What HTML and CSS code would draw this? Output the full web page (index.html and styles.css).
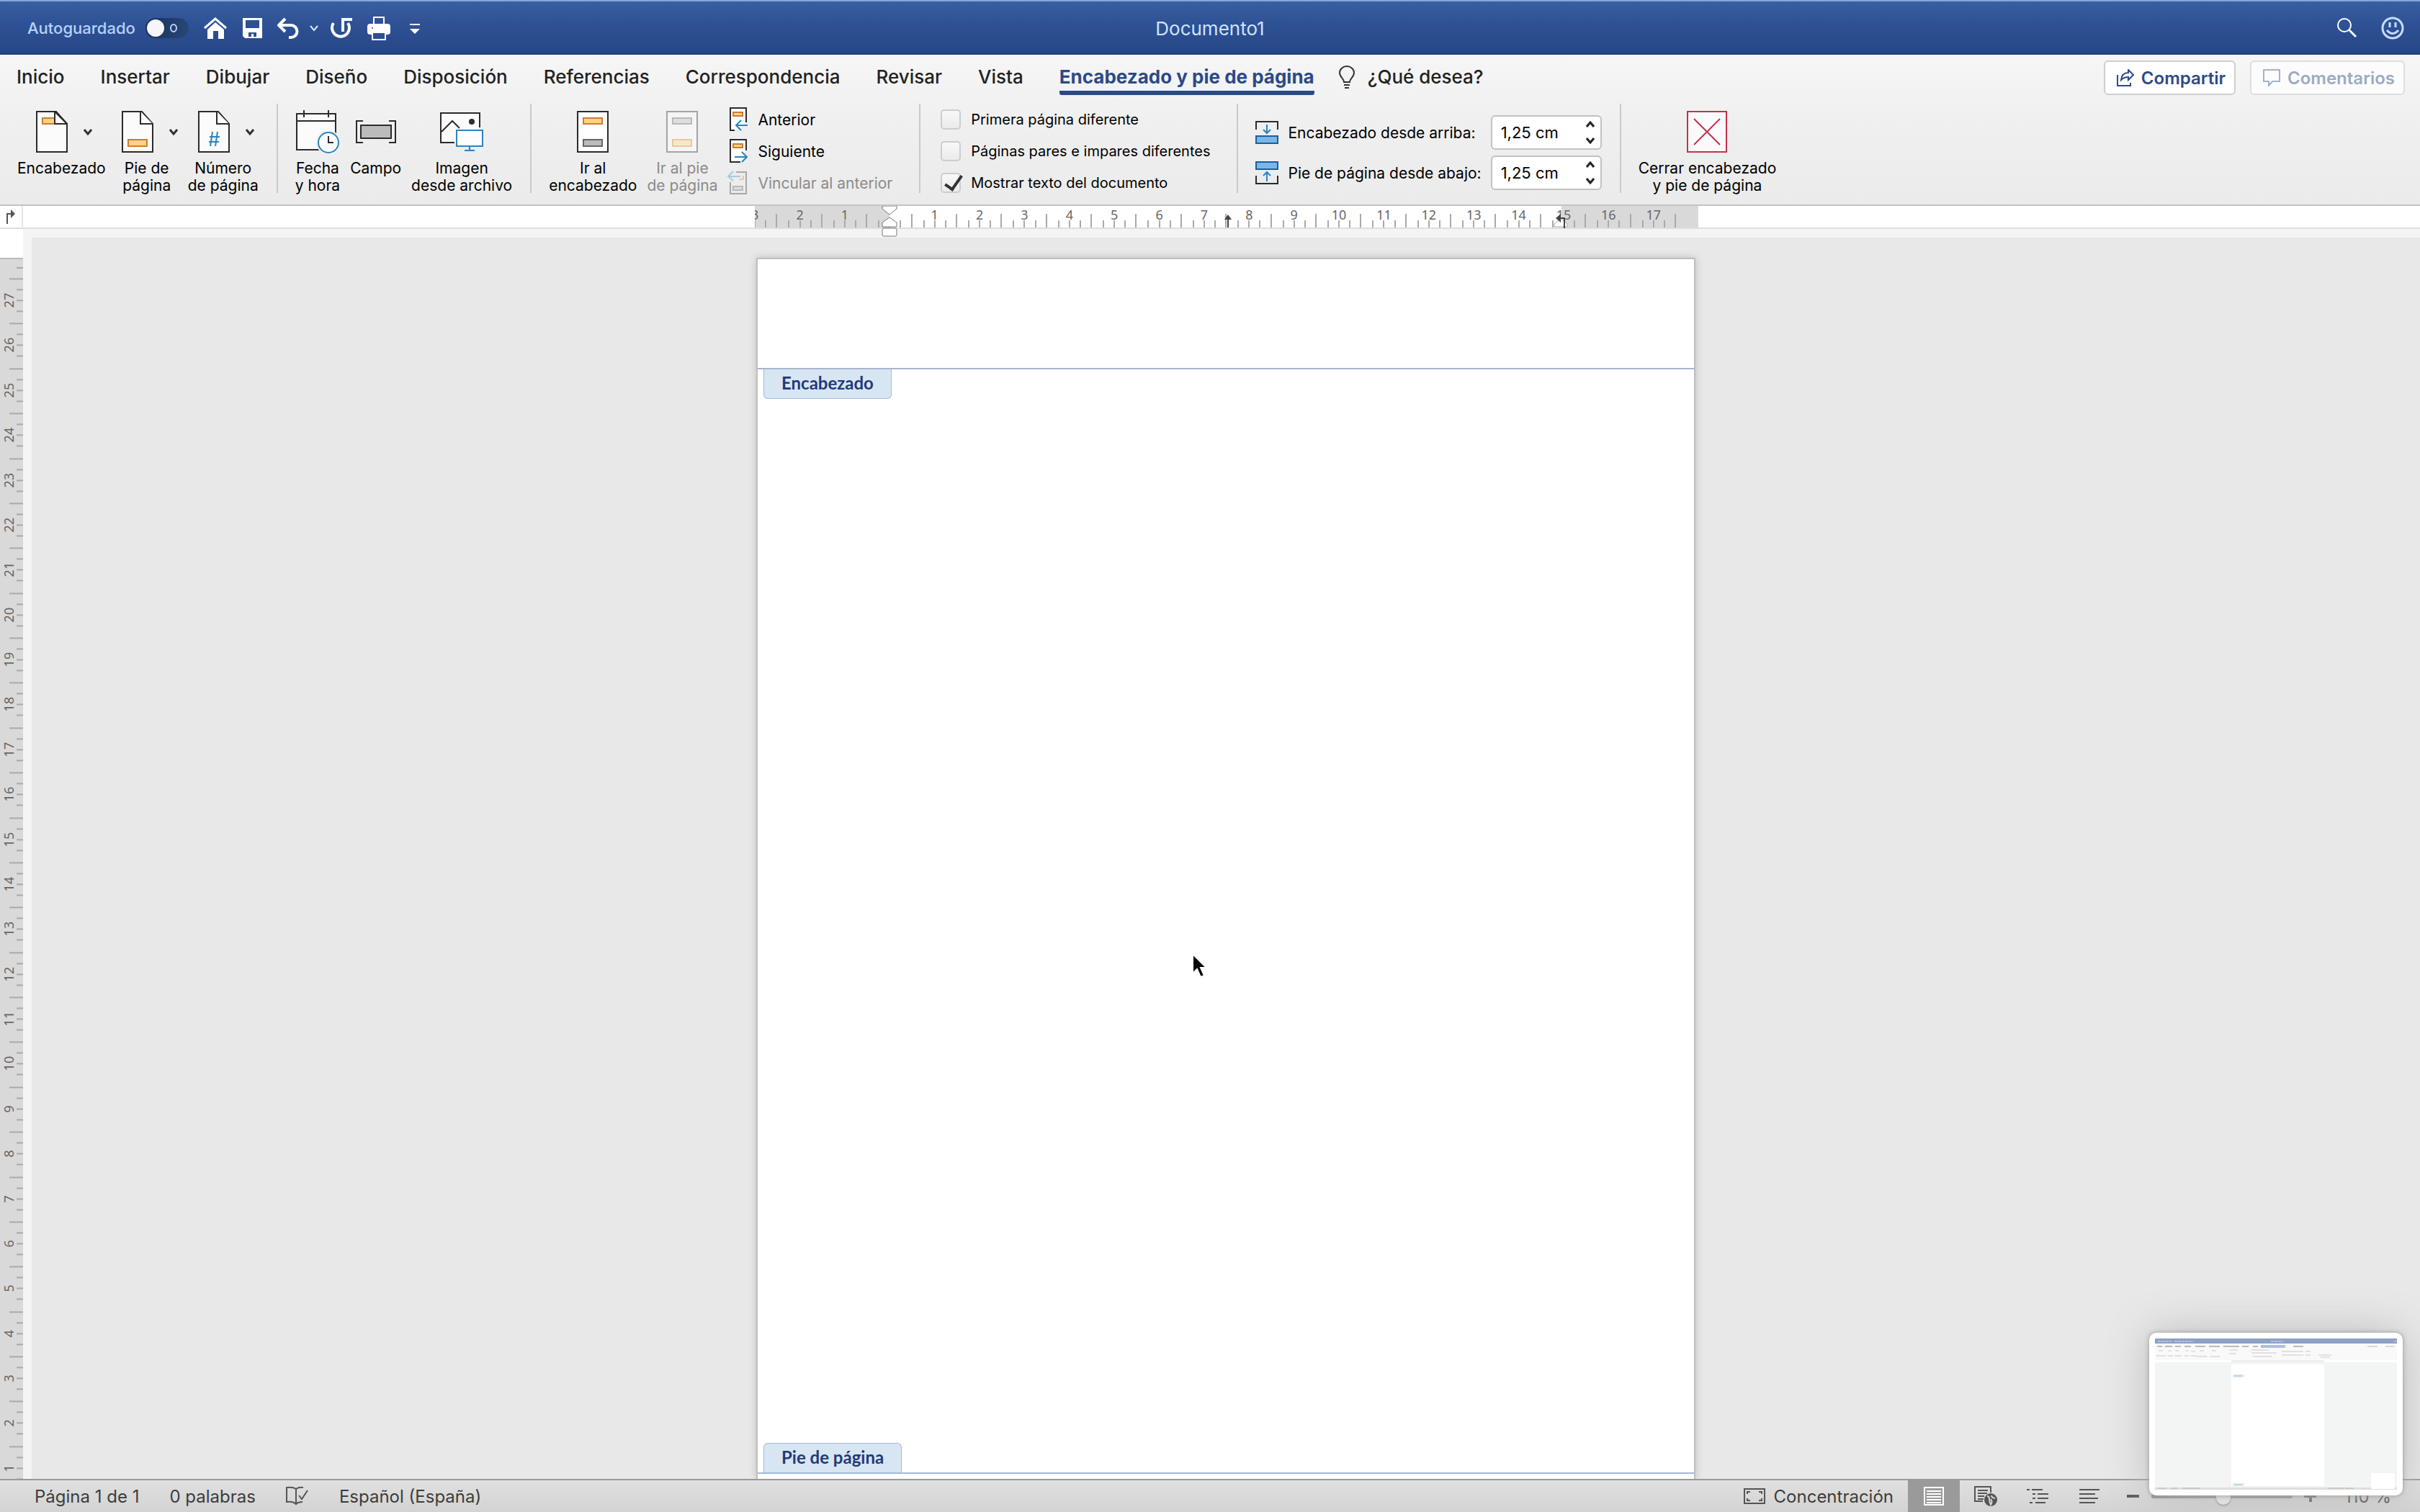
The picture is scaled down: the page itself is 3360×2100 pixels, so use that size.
FILE: index.html
```html
<!DOCTYPE html>
<html lang="es">
    <head>
        <meta charset="UTF-8">
        <meta name="viewport" content="width=device-width, initial-scale=1.0">
        <title>Documento1</title>
        <link rel="stylesheet" href="styles.css">
    </head>
    <body>
        <header class="titlebar">
            <div class="quick">
                <label class="autosave">Autoguardado
                    <input type="checkbox" class="switch">
                    <span class="switch-track"><span class="switch-knob"></span><span class="switch-off"></span></span>
                </label>
                <button aria-label="Inicio"><svg width="32" height="32"><path d="M1 16 16 3l15 13" fill="none" stroke="#fff" stroke-width="3"/><path d="M5 18 16 8l12 10v13h-8V20h-7v11H5z" fill="#fff"/></svg></button>
                <button aria-label="Guardar"><svg width="28" height="32"><path d="M1 2h27v28H4l-3-3z" fill="#fff"/><path d="M5 5h19v11H5zM9 22h11v6h-4v-4h-3v4H9z" fill="#2d5092"/></svg></button>
                <button aria-label="Deshacer"><svg width="30" height="32"><path d="M11 3 2 12l9 9M3 12h16a8.500 8.500 0 0 1 0 17h-3" fill="none" stroke="#fff" stroke-width="4"/></svg></button>
                <button class="quick-more" aria-label="Opciones de deshacer"><svg width="12" height="32"><path d="m1 13 5 6 5-6" fill="none" stroke="#dce8ff" stroke-width="2"/></svg></button>
                <button aria-label="Repetir"><svg width="30" height="32"><path d="M4 9A12 12 0 1 0 24 9" fill="none" stroke="#fff" stroke-width="4"/><path d="M17 21V4h13" fill="none" stroke="#fff" stroke-width="4"/></svg></button>
                <button aria-label="Imprimir"><svg width="32" height="34"><path d="M9 11V2h14v9" fill="none" stroke="#fff" stroke-width="2"/><rect y="11" width="32" height="15" rx="4" fill="#fff"/><rect x="7" y="23" width="18" height="10" fill="#2c4f91" stroke="#fff" stroke-width="2"/><circle cx="7" cy="17" r="1" fill="#2c4f91"/></svg></button>
                <button class="quick-last" aria-label="Personalizar"><svg width="14" height="32"><path d="M0 11h14" stroke="#fff" stroke-width="2"/><path d="M0 17h14l-7 7z" fill="#fff"/></svg></button>
            </div>
            <h1>Documento1</h1>
            <div class="title-right">
                <button aria-label="Buscar"><svg width="28" height="30" fill="none" stroke="#fff" stroke-width="2"><circle cx="11" cy="11" r="9"/><path d="m17 17 10 10" stroke-width="3"/></svg></button>
                <button aria-label="Comentarios"><svg width="32" height="32" fill="none" stroke="#c6dcff" stroke-width="3"><circle cx="16" cy="16" r="14"/><path d="M12 8v7M20 8v7M8 19q8 9 16 0"/></svg></button>
            </div>
        </header>

        <div class="ribbon">
            <nav class="tabs">
                <a href="#">Inicio</a>
                <a href="#">Insertar</a>
                <a href="#">Dibujar</a>
                <a href="#">Diseño</a>
                <a href="#">Disposición</a>
                <a href="#">Referencias</a>
                <a href="#">Correspondencia</a>
                <a href="#">Revisar</a>
                <a href="#">Vista</a>
                <a href="#" class="active">Encabezado y pie de página</a>
                <a href="#" class="tell"><svg width="22" height="32" fill="none" stroke="#333" stroke-width="2"><path d="M7 23c0-5-6-7-6-13a10 9 0 0 1 20 0c0 6-6 8-6 13zM7 27h8M8 31h6"/></svg>¿Qué desea?</a>
                <div class="tab-actions">
                    <button class="action"><svg width="24" height="24" fill="none" stroke="#2b4a87" stroke-width="2"><path d="M1 8v15h18v-4M6 15Q7 5 16 5V1l7 7-7 7v-4q-6 0-10 4z"/></svg>Compartir</button>
                    <button class="action" disabled><svg width="24" height="24" fill="none" stroke="#a4b2cc" stroke-width="2"><path d="M1 1h22v16H13l-5 6v-6H1z"/></svg>Comentarios</button>
                </div>
            </nav>

            <div class="tools">
                <section class="group menus">
                    <button class="tool">
                        <span class="icon"><svg width="44" height="58"><path d="M1 1h27l15 17v39H1z" fill="#fbfbfb" stroke="#2b2b2b" stroke-width="2"/><path d="M9 10h18v8H9z" fill="#ffd480" stroke="#d27a32" stroke-width="2"/><path d="M26 1v17h17z" fill="#fff" stroke="#2b2b2b" stroke-width="2"/></svg><svg width="12" height="10"><path d="m1 2 5 6 5-6" fill="none" stroke="#333" stroke-width="3"/></svg></span>
                        Encabezado
                    </button>
                    <button class="tool">
                        <span class="icon"><svg width="44" height="58"><path d="M1 1h27l15 17v39H1z" fill="#fbfbfb" stroke="#2b2b2b" stroke-width="2"/><path d="M26 1v17h17" fill="#fff" stroke="#2b2b2b" stroke-width="2"/><path d="M9 40h26v9H9z" fill="#ffd480" stroke="#d27a32" stroke-width="2"/></svg><svg width="12" height="10"><path d="m1 2 5 6 5-6" fill="none" stroke="#333" stroke-width="3"/></svg></span>
                        Pie de<br>página
                    </button>
                    <button class="tool">
                        <span class="icon"><svg width="44" height="58"><path d="M1 1h27l15 17v39H1z" fill="#fbfbfb" stroke="#2b2b2b" stroke-width="2"/><path d="M26 1v17h17" fill="#fff" stroke="#2b2b2b" stroke-width="2"/><path d="m20 29-3 20m10-20-3 20m-8-13h14m-15 7h14" fill="none" stroke="#2d84bd" stroke-width="2"/></svg><svg width="12" height="10"><path d="m1 2 5 6 5-6" fill="none" stroke="#333" stroke-width="3"/></svg></span>
                        Número<br>de página
                    </button>
                </section>

                <section class="group">
                    <button class="tool">
                        <span class="icon"><svg width="60" height="60" fill="none" stroke="#2b2b2b" stroke-width="2"><path d="M1 5h54v50H1z" fill="#fbfbfb"/><path d="M1 15h54M11 0v10M45 0v10"/><circle cx="45" cy="45" r="17" fill="#f0f0f0" stroke="none"/><circle cx="45" cy="45" r="14" fill="#fdfdfd" stroke="#2d84bd"/><path d="M45 36v9h7"/></svg></span>
                        Fecha<br>y hora
                    </button>
                    <button class="tool">
                        <span class="icon"><svg width="56" height="32" fill="none" stroke="#2b2b2b" stroke-width="2"><path d="M10 1H1v30h9M46 1h9v30h-9"/><path d="M7 7h42v18H7z" fill="#bdbbba"/></svg></span>
                        Campo
                    </button>
                    <button class="tool">
                        <span class="icon"><svg width="60" height="54" fill="none" stroke="#2b2b2b" stroke-width="2"><path d="M20 42H1V1h54v20" fill="#fbfbfb"/><path d="m2 27 15-15 10 10"/><circle cx="44" cy="13" r="3" fill="#333"/><path d="M23 25h36v22H23z" fill="#fdfdfd" stroke="#2d84bd"/><path d="M41 47v6M34 53h14" stroke="#2d84bd"/></svg></span>
                        Imagen<br>desde archivo
                    </button>
                </section>

                <section class="group">
                    <button class="tool">
                        <span class="icon"><svg width="44" height="58" stroke-width="2"><path d="M1 1h42v56H1z" fill="#fff" stroke="#2b2b2b"/><path d="M9 10h26v8H9z" fill="#ffd480" stroke="#d27a32"/><path d="M9 40h26v9H9z" fill="#bdbbba" stroke="#666"/></svg></span>
                        Ir al<br>encabezado
                    </button>
                    <button class="tool" disabled>
                        <span class="icon"><svg width="44" height="58" stroke-width="2"><path d="M1 1h42v56H1z" fill="#f5f5f5" stroke="#a3a3a3"/><path d="M9 10h26v8H9z" fill="#dedede" stroke="#bababa"/><path d="M9 40h26v9H9z" fill="#f5e8c9" stroke="#ecc6a5"/></svg></span>
                        Ir al pie<br>de página
                    </button>
                    <div class="stack">
                        <button class="small"><svg width="28" height="34" fill="none" stroke-width="2"><path d="M10 32H4V1h22v20" fill="#fff" stroke="#2b2b2b"/><path d="M8 7h13v5H8z" fill="#ffd480" stroke="#d27a32"/><path d="M28 25H12m7-7-7 7 7 7" stroke="#2d84bd"/></svg>Anterior</button>
                        <button class="small"><svg width="28" height="34" fill="none" stroke-width="2"><path d="M18 32H4V1h22v15" fill="#fff" stroke="#2b2b2b"/><path d="M8 7h13v5H8z" fill="#ffd480" stroke="#d27a32"/><path d="M10 25h17m-7-7 7 7-7 7" stroke="#2d84bd"/></svg>Siguiente</button>
                        <button class="small" disabled><svg width="28" height="34" fill="none" stroke-width="2"><path d="M4 16v16h22V2H12" stroke="#a8a8a8"/><path d="M8 22h13v5H8z" fill="#dedede" stroke="#bababa"/><path d="M16 12h6V7" stroke="#ecc6a5"/><path d="M18 8H2m6-7L1 8l7 6" stroke="#a3cbe5"/></svg>Vincular al anterior</button>
                    </div>
                </section>

                <section class="group options">
                    <div class="stack">
                        <label class="small"><input type="checkbox">Primera página diferente</label>
                        <label class="small"><input type="checkbox">Páginas pares e impares diferentes</label>
                        <label class="small"><input type="checkbox" checked>Mostrar texto del documento</label>
                    </div>
                </section>

                <section class="group">
                    <div class="distances">
                        <svg width="32" height="32" fill="none" stroke-width="2"><path d="M1 12V1h30v11" stroke="#2b2b2b"/><path d="M16 5v12m-5-5 5 5 5-5" stroke="#2d84bd"/><path d="M1 21h30v10H1z" fill="#79b7e9" stroke="#19609f"/></svg>
                        <label for="top">Encabezado desde arriba:</label>
                        <div class="spin">
                            <input id="top" type="text" value="1,25 cm">
                            <button aria-label="Aumentar"><svg width="12" height="10"><path d="m1 8 5-6 5 6" fill="none" stroke="#222" stroke-width="3"/></svg></button>
                            <button aria-label="Disminuir"><svg width="12" height="10"><path d="m1 2 5 6 5-6" fill="none" stroke="#222" stroke-width="3"/></svg></button>
                        </div>
                        <svg width="32" height="32" fill="none" stroke-width="2"><path d="M1 20v11h30V20" stroke="#2b2b2b"/><path d="M16 28V15m-5 5 5-5 5 5" stroke="#2d84bd"/><path d="M1 1h30v10H1z" fill="#79b7e9" stroke="#19609f"/></svg>
                        <label for="bottom">Pie de página desde abajo:</label>
                        <div class="spin">
                            <input id="bottom" type="text" value="1,25 cm">
                            <button aria-label="Aumentar"><svg width="12" height="10"><path d="m1 8 5-6 5 6" fill="none" stroke="#222" stroke-width="3"/></svg></button>
                            <button aria-label="Disminuir"><svg width="12" height="10"><path d="m1 2 5 6 5-6" fill="none" stroke="#222" stroke-width="3"/></svg></button>
                        </div>
                    </div>
                </section>

                <section class="group">
                    <button class="tool">
                        <span class="icon"><svg width="56" height="58" fill="none" stroke="#c4314b" stroke-width="2"><path d="M1 1h54v56H1z" fill="#fafafa"/><path d="m10 11 36 36m0-36L10 47"/></svg></span>
                        Cerrar encabezado<br>y pie de página
                    </button>
                </section>
            </div>
        </div>

        <main class="workspace">
            <button class="tab-stop" aria-label="Tabulación"><svg width="14" height="20"><path d="M2 20V6h6" fill="none" stroke="#555" stroke-width="2"/><path d="M7 0v12l6-6z" fill="#555"/></svg></button>
            <div class="ruler-bar">
                <div class="ruler">
                    <ol>
                        <li>3</li><li>2</li><li>1</li><li></li><li>1</li><li>2</li><li>3</li>
                        <li>4</li><li>5</li><li>6</li><li>7</li><li>8</li><li>9</li><li>10</li>
                        <li>11</li><li>12</li><li>13</li><li>14</li><li>15</li><li>16</li><li>17</li>
                    </ol>
                    <!-- indents and tab stops -->
                    <svg class="markers" width="1310" height="46" fill="none" stroke="#777">
                        <path d="M177 0v4l10 8 10-8V0zM177 29v-6l10-7 10 7v6z" fill="#fff"/>
                        <rect x="177" y="31" width="20" height="11" rx="2" fill="#fff"/>
                        <path d="M657 30V18" stroke="#444" stroke-width="2"/><path d="m652 19 5-7 5 7z" fill="#444" stroke="none"/>
                        <path d="M1110 29v-4l9-8 9 8v4z" fill="#fff" stroke="#aaa"/>
                        <path d="M1124 31V17h-6" stroke="#444" stroke-width="2"/><path d="M1119 11v12l-7-6z" fill="#444" stroke="none"/>
                    </svg>
                </div>
            </div>
            <div class="vruler">
                <ol>
                    <li>27</li><li>26</li><li>25</li><li>24</li><li>23</li><li>22</li><li>21</li><li>20</li><li>19</li>
                    <li>18</li><li>17</li><li>16</li><li>15</li><li>14</li><li>13</li><li>12</li><li>11</li><li>10</li>
                    <li>9</li><li>8</li><li>7</li><li>6</li><li>5</li><li>4</li><li>3</li><li>2</li><li>1</li>
                </ol>
            </div>
            <div class="canvas">
                <article class="page">
                    <div class="page-header"></div>
                    <div class="page-body">
                        <span class="mark mark-top">Encabezado</span>
                        <span class="mark mark-bottom">Pie de página</span>
                    </div>
                </article>
            </div>
        </main>

        <footer class="status">
            <span>Página 1 de 1</span>
            <span>0 palabras</span>
            <button aria-label="Ortografía"><svg width="32" height="28" fill="none" stroke="#555" stroke-width="2"><path d="M14 25V4Q10 1 1 2v20q9-1 13 3 3-3 9-3M14 4q4-3 10-2M18 13l4 5 8-12"/></svg></button>
            <button>Español (España)</button>
            <div class="views">
                <button class="focus"><svg width="30" height="22" fill="none" stroke="#555" stroke-width="2"><rect x="1" y="1" width="28" height="20"/><path d="M5 8V5h4M21 5h4v3M25 14v3h-4M9 17H5v-3"/></svg>Concentración</button>
                <button class="view selected" aria-label="Diseño de impresión"><svg width="28" height="26" fill="none" stroke="#fff" stroke-width="2"><path d="M1 1h26v24H1zM4 6h20M4 10h20M4 14h20M4 18h20M4 22h20"/></svg></button>
                <button class="view" aria-label="Diseño web"><svg width="32" height="28" fill="none" stroke="#555" stroke-width="2"><path d="M12 21H1V1h22v8M5 6h14M5 10h13M5 14h9M5 18h8"/><circle cx="23" cy="19" r="9" fill="#555" stroke="none"/><path d="M18 14q3 0 3 4t2 8q3-4 0-8M24 13q0 3 5 4" stroke="#d6d6d6"/></svg></button>
                <button class="view" aria-label="Esquema"><svg width="30" height="24" fill="none" stroke="#555" stroke-width="2"><path d="M0 3h4M7 3h15M8 9h4M15 9h15M8 15h4M15 15h15M4 21h4M12 21h14"/></svg></button>
                <button class="view" aria-label="Borrador"><svg width="28" height="24" fill="none" stroke="#555" stroke-width="2"><path d="M0 3h28M0 9h22M0 15h26M0 21h22"/></svg></button>
                <button class="zoom-btn" aria-label="Reducir"><svg width="18" height="18"><path d="M0 9h17" stroke="#555" stroke-width="4"/></svg></button>
                <input class="zoom" type="range" min="10" max="210" value="112" aria-label="Zoom">
                <button class="zoom-btn" aria-label="Ampliar"><svg width="18" height="18"><path d="M0 9h17M9 1v16" stroke="#555" stroke-width="4"/></svg></button>
                <span>110 %</span>
            </div>
        </footer>

        <svg class="pointer" width="22" height="36"><path d="M2 2v27l6-6 5 11 5-2-5-11h8z" fill="#000" stroke="#fff" stroke-width="2"/></svg>

        <!-- floating capture preview -->
        <aside class="capture">
            <svg viewBox="0 0 336 210">
                <path d="M0 0h336v210H0z" fill="#f3f4f4"/>
                <path d="M0 0h336v7H0z" fill="#8da1c6"/>
                <path d="M0 7h336v23H0z" fill="#f9f9fa"/>
                <path d="M4 4h19M27 4h26M161 4h17M332 4h3" stroke="#b0c0df" stroke-width="2" stroke-dasharray="4 1"/>
                <path d="M3 11h7M14 11h10M28 11h8M41 11h9M56 11h14M75 11h15M95 11h22M121 11h9M136 11h7M192 11h14" stroke="#b7bcc6" stroke-width="2"/>
                <path d="M147 9h34v4h-34z" fill="#aebfdf"/>
                <path d="M295 11h14M320 11h12" stroke="#d3d9e6" stroke-width="2"/>
                <path d="M5 17h6M18 17h5M28 17h5M42 17h5M50 18h6M62 17h6M79 17h6M103 16h12M134 16h24M134 20h35M136 25h26M176 18h30M176 23h30M209 18h7M209 23h7M2 24h13M17 24h8M27 24h10M41 24h6M50 24h8M58 25h14M76 25h14M103 21h10M227 23h18M230 26h13" stroke="#c7c9cc"/>
                <path d="M106 30h129v3H106z" fill="#eee"/>
                <path d="M0 30h106v3H0zM235 30h101v3H235z" fill="#fff"/>
                <path d="M106 36h129v169H106z" fill="#fff"/>
                <path d="M108 52h16M108 203h16" stroke="#e3edf6" stroke-width="4"/>
                <path d="M110 52h11M110 203h11" stroke="#a9b8d4"/>
                <path d="M0 207h336v3H0z" fill="#dedede"/>
                <path d="M4 208h12M22 208h10M38 208h24M240 208h22M264 208h12" stroke="#b5b5b5"/>
                <rect x="300" y="187" width="33" height="22" rx="1" fill="#fff"/>
            </svg>
        </aside>
    </body>
</html>
```
FILE: styles.css
```css
* { box-sizing: border-box; }
html, body { height: 100%; }
body {
    margin: 0;
    display: flex;
    flex-direction: column;
    overflow: hidden;
    background: #e8e8e8;
    color: #000;
    font-family: Inter, "Liberation Sans", sans-serif;
    font-size: 21px;
}
button {
    border: none;
    background: none;
    padding: 0;
    color: inherit;
    font: inherit;
}
input { font: inherit; }
svg { display: block; flex: none; }
ol { list-style: none; margin: 0; padding: 0; }

/* title bar */
.titlebar {
    height: 76px;
    flex: none;
    display: grid;
    grid-template-columns: 1fr auto 1fr;
    align-items: center;
    padding: 2px 22px 0;
    border-top: 2px solid #88a5d6;
    border-bottom: 2px solid #263f78;
    background: linear-gradient(#38609f, #2f5296 40%, #264787);
}
.quick {
    display: flex;
    align-items: center;
    gap: 21px;
    padding-left: 16px;
}
.autosave {
    display: flex;
    align-items: center;
    gap: 14px;
    color: #b5d2fb;
    font-size: 22px;
    font-weight: 500;
}
.switch {
    position: absolute;
    opacity: 0;
}
.switch-track {
    width: 60px;
    height: 28px;
    display: flex;
    align-items: center;
    gap: 8px;
    padding: 0 2px;
    border-radius: 14px;
    background: linear-gradient(90deg, #18315a, #294678);
}
.switch-knob {
    width: 24px;
    height: 24px;
    border-radius: 50%;
    background: #f6f6f8;
}
.switch-off {
    width: 10px;
    height: 12px;
    border: 2px solid #bcd3f3;
    border-radius: 50%;
}
.quick-more { margin: 0 -4px 0 -6px; }
.quick-last { margin-left: 6px; }
.titlebar h1 {
    margin: 0;
    font-size: 26px;
    font-weight: 400;
    color: #cfe2ff;
}
.title-right {
    display: flex;
    justify-content: flex-end;
    align-items: center;
    gap: 34px;
}

/* ribbon */
.ribbon {
    height: 210px;
    flex: none;
    border-bottom: 2px solid #c3c3c3;
    background: linear-gradient(#f6f6f6, #efefef 50%, #ebebeb);
}
.tabs {
    height: 60px;
    display: flex;
    align-items: center;
    gap: 50px;
    padding: 0 21px 0 23px;
    font-size: 26px;
    font-weight: 500;
}
.tabs a {
    padding: 12px 0 4px;
    border-bottom: 6px solid transparent;
    color: #222;
    line-height: 30px;
    text-decoration: none;
    white-space: nowrap;
}
.tabs .active {
    border-radius: 3px;
    color: #2b4a87;
    font-weight: 700;
    background: linear-gradient(#2b4a87, #2b4a87) bottom / 100% 6px no-repeat border-box;
}
.tabs .tell {
    display: flex;
    align-items: center;
    gap: 18px;
    margin-left: -16px;
}
.tab-actions {
    display: flex;
    gap: 20px;
    margin-left: auto;
    padding-top: 4px;
}
.action {
    height: 48px;
    display: flex;
    align-items: center;
    gap: 10px;
    padding: 0 12px 0 16px;
    border: 2px solid #cfcfcf;
    border-radius: 6px;
    background: #fff;
    color: #2b4a87;
    font-size: 24px;
    font-weight: 600;
}
.action:disabled {
    background: #fcfcfc;
    border-color: #dedede;
    color: #9dabc3;
}
.tools {
    display: flex;
    padding-top: 8px;
}
.group {
    height: 124px;
    display: flex;
    align-items: flex-start;
    gap: 14px;
    padding: 0 25px 0 24px;
    border-right: 2px solid #cacaca;
}
.group:last-child { border: none; }
.menus .icon { padding-left: 8px; }
.tool {
    display: flex;
    flex-direction: column;
    align-items: center;
    line-height: 24px;
    white-space: nowrap;
}
.icon {
    height: 78px;
    display: flex;
    align-items: center;
    gap: 22px;
}
.tool:disabled, .small:disabled { color: #8b8b8b; }
.stack {
    display: flex;
    flex-direction: column;
    padding-right: 12px;
}
.small {
    height: 44px;
    display: flex;
    align-items: center;
    gap: 14px;
    white-space: nowrap;
}
.options {
    padding-left: 28px;
    font-size: 20px;
}
.stack input {
    appearance: none;
    width: 28px;
    height: 28px;
    margin: 0;
    border: 2px solid #cdcdcd;
    border-radius: 5px;
    background: linear-gradient(#f8f8f8, #ebebeb);
}
.stack input:checked::before {
    content: "";
    display: block;
    width: 10px;
    height: 21px;
    margin: -3px 0 0 9px;
    border: solid #333;
    border-width: 0 4px 4px 0;
    transform: rotate(35deg);
}
.distances {
    display: grid;
    grid-template-columns: 32px auto 154px;
    align-items: center;
    gap: 8px 13px;
    padding-top: 16px;
}
.spin {
    height: 48px;
    display: grid;
    grid-template-columns: 1fr 28px;
    border: 2px solid #c2c2c2;
    border-radius: 6px;
    background: #fff;
}
.spin input {
    grid-row: span 2;
    width: 100%;
    padding: 0 0 0 12px;
    border: none;
    background: none;
    font-size: 22px;
}
.spin button {
    display: grid;
    place-items: center;
}

/* rulers and paper */
.workspace {
    flex: 1;
    min-height: 0;
    display: grid;
    grid-template-columns: 32px 1fr;
    grid-template-rows: 32px 1fr;
}
.tab-stop {
    padding-left: 8px;
    border-right: 2px solid #e6e6e6;
    border-bottom: 2px solid #dedede;
    background: #fff;
}
.ruler-bar {
    display: flex;
    justify-content: center;
    padding-left: 14px;
    border-bottom: 2px solid #dedede;
    background: #fff;
}
.ruler {
    position: relative;
    width: 1310px;
    background: linear-gradient(90deg, #d9d9d9 187px, #fff 187px, #fff 1120px, #d9d9d9 1120px);
}
.ruler ol {
    height: 30px;
    display: flex;
    overflow: hidden;
}
.ruler ol::before {
    content: "";
    margin-left: -31px;
}
.ruler li, .vruler li {
    color: #666;
    font-family: "Noto Sans", sans-serif;
    font-size: 18px;
    line-height: 24px;
}
.ruler li {
    flex: 0 0 calc(100% / 21);
    text-align: center;
    background:
        linear-gradient(#aaa, #aaa) 25% 100% / 2px 10px no-repeat,
        linear-gradient(#aaa, #aaa) 50% 100% / 2px 10px no-repeat,
        linear-gradient(#aaa, #aaa) 75% 100% / 2px 10px no-repeat,
        linear-gradient(#aaa, #aaa) 100% 100% / 2px 19px no-repeat;
}
.markers {
    position: absolute;
    left: 0;
    top: 0;
}
.vruler {
    min-height: 0;
    overflow: hidden;
    padding-top: 68px;
    background:
        linear-gradient(#aaa, #aaa) 100% 53px / 9px 2px no-repeat,
        linear-gradient(#fff 40px, #bbb 40px, #bbb 42px, #d9d9d9 42px);
}
.vruler ol {
    height: 1684px;
    display: flex;
    flex-direction: column;
}
.vruler li {
    flex: 1;
    writing-mode: vertical-rl;
    text-align: center;
    transform: rotate(180deg);
    background:
        linear-gradient(#aaa, #aaa) 0 25% / 9px 2px no-repeat,
        linear-gradient(#aaa, #aaa) 0 50% / 9px 2px no-repeat,
        linear-gradient(#aaa, #aaa) 0 75% / 9px 2px no-repeat,
        linear-gradient(#aaa, #aaa) 0 100% / 19px 2px no-repeat;
}
.canvas {
    min-height: 0;
    display: flex;
    justify-content: center;
    padding-top: 28px;
    border-top: 12px solid #f4f4f4;
    border-left: 12px solid #f4f4f4;
    overflow: hidden;
}
.page {
    width: 1304px;
    display: flex;
    flex-direction: column;
    padding-bottom: 7px;
    border: 2px solid #bfbfbf;
    border-bottom: none;
    background: #fff;
    box-shadow: 0 0 10px #bbb;
}
.page-header { height: 151px; }
.page-body {
    flex: 1;
    display: flex;
    flex-direction: column;
    justify-content: space-between;
    align-items: flex-start;
    padding-left: 8px;
    border-top: 2px solid #a9b6cf;
    border-bottom: 2px solid #a0b9dc;
}
.mark {
    padding: 0 24px 2px;
    border: 1px solid #a0bbdf;
    background: #d8e6f3;
    color: #23397a;
    font-family: Lato, "Noto Sans", sans-serif;
    font-size: 24px;
    font-weight: 700;
    line-height: 38px;
}
.mark-top {
    border-top: none;
    border-radius: 0 0 6px 6px;
}
.mark-bottom {
    border-bottom: none;
    border-radius: 6px 6px 0 0;
}

/* status bar */
.status {
    height: 46px;
    flex: none;
    display: flex;
    align-items: center;
    gap: 42px;
    padding-left: 48px;
    border-top: 2px solid #999;
    background: linear-gradient(#e0e0e0, #d3d3d3);
    color: #3c3c3c;
    font-size: 24px;
}
.views {
    height: 100%;
    display: flex;
    align-items: center;
    margin-left: auto;
    padding-right: 40px;
}
.focus {
    display: flex;
    align-items: center;
    gap: 12px;
    margin-right: 20px;
}
.view {
    width: 72px;
    height: 100%;
    display: grid;
    place-items: center;
}
.selected {
    background: #9a9a9a;
    box-shadow: 0 -2px #9a9a9a;
}
.zoom-btn { margin: 0 16px; }
.zoom {
    appearance: none;
    width: 196px;
    height: 6px;
    margin: 0;
    border-radius: 3px;
    background: #8a8a8a;
}
.zoom::-webkit-slider-thumb {
    appearance: none;
    width: 20px;
    height: 24px;
    border-radius: 10px;
    background: #f5f5f5;
    box-shadow: 0 1px 3px #777;
}
.views span { margin-left: 22px; }

/* things lying over the window */
.pointer {
    position: absolute;
    left: 1654px;
    top: 1323px;
}
.capture {
    position: absolute;
    right: 24px;
    bottom: 23px;
    width: 352px;
    padding: 8px;
    border-radius: 10px;
    background: #fff;
    box-shadow: 0 0 6px #999, 0 0 60px #bbb;
}
.capture svg { width: 100%; }
```
